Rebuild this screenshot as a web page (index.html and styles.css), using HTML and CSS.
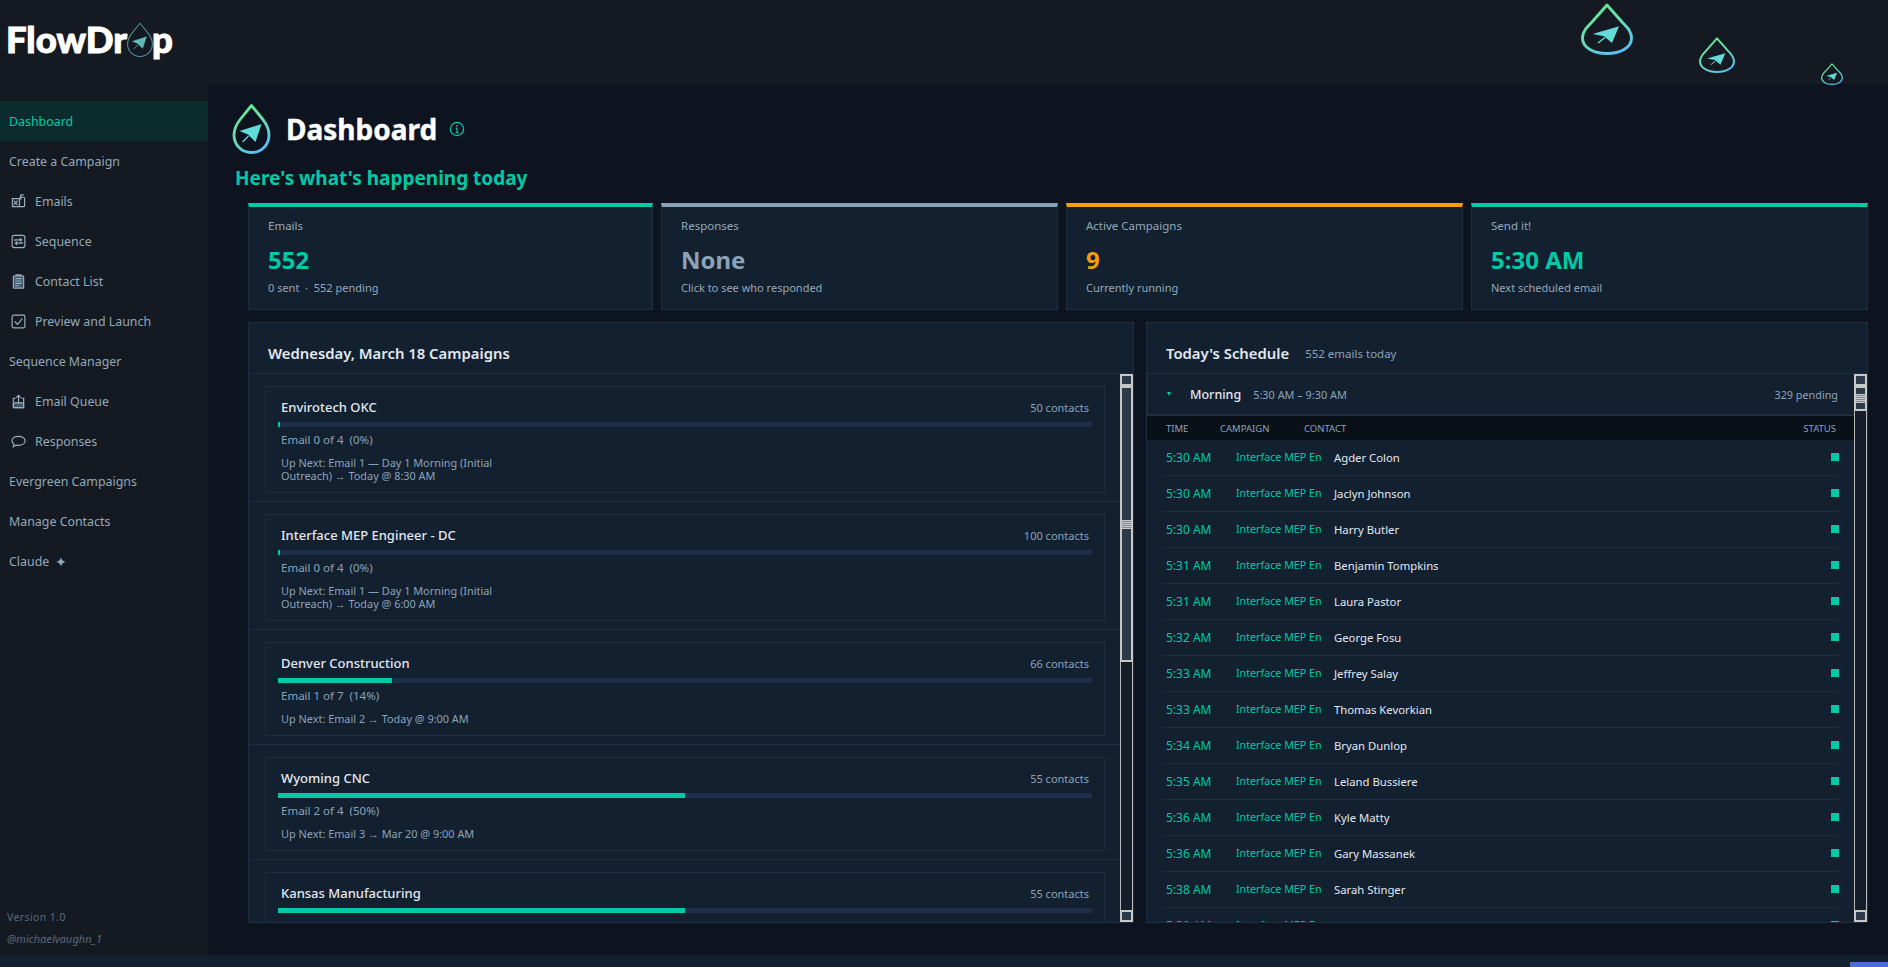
FILE: index.html
```html
<!DOCTYPE html>
<html lang="en">
<head>
<meta charset="utf-8">
<title>FlowDrop Dashboard</title>
<link rel="stylesheet" href="styles.css">
</head>
<body>
<svg class="defs" width="0" height="0" aria-hidden="true">
  <defs>
    <linearGradient id="dropGrad" x1="0.2" y1="0.05" x2="0.75" y2="1">
      <stop offset="0" stop-color="#63e692"/>
      <stop offset="0.45" stop-color="#68dfb0"/>
      <stop offset="1" stop-color="#56c0f8"/>
    </linearGradient>
    <linearGradient id="logoGrad" x1="0.25" y1="0" x2="0.7" y2="1">
      <stop offset="0" stop-color="#4fa583"/>
      <stop offset="1" stop-color="#4a94b8"/>
    </linearGradient>
    <symbol id="dropWide" viewBox="0 0 52 52">
      <path d="M26 2 L41 19 C47 25 50.500 29 50.500 35 C50.500 45 39 50.500 26 50.500 C13 50.500 1.500 45 1.500 35 C1.500 29 5 25 11 19 Z" fill="none" stroke="url(#dropGrad)" stroke-width="2.900" stroke-linejoin="round"/>
      <path d="M11.700 31 L38 23.300 L31 40 L23 33.300 Z" fill="#62dcd6"/>
      <path d="M24 34.500 L17 40" stroke="#62dcd6" stroke-width="1.400" fill="none"/>
    </symbol>
    <symbol id="dropTall" viewBox="0 0 38 50">
      <path d="M19 1.500 L30 15 C34 20 36.500 25 36.500 31 C36.500 41 29 48.500 19 48.500 C9 48.500 1.500 41 1.500 31 C1.500 25 4 20 8 15 Z" fill="none" stroke="url(#dropGrad)" stroke-width="2.800" stroke-linejoin="round"/>
      <path d="M7 27 L29 20 L23 38 L15.500 30.500 Z" fill="#62dcd6"/>
      <path d="M16 32 L10 38" stroke="#62dcd6" stroke-width="1.300" fill="none"/>
    </symbol>
    <symbol id="dropLogo" viewBox="0 0 38 50">
      <path d="M19 1.500 L30 15 C34 20 36.500 25 36.500 31 C36.500 41 29 48.500 19 48.500 C9 48.500 1.500 41 1.500 31 C1.500 25 4 20 8 15 Z" fill="#151922" stroke="url(#logoGrad)" stroke-width="2.800" stroke-linejoin="round"/>
      <path d="M7 27 L29 20 L23 38 L15.500 30.500 Z" fill="#5fb8b4"/>
      <path d="M16 32 L10 38" stroke="#5fb8b4" stroke-width="1.300" fill="none"/>
    </symbol>
  </defs>
</svg>

<header class="topbar">
  <div class="logo"><span>FlowDr</span><svg class="logo-drop"><use href="#dropLogo"/></svg><span>p</span></div>
  <svg class="float-drop float-a"><use href="#dropWide"/></svg>
  <svg class="float-drop float-b"><use href="#dropWide"/></svg>
  <svg class="float-drop float-c"><use href="#dropWide"/></svg>
</header>

<div class="shell">
  <aside class="sidebar">
    <nav class="nav">
      <a class="nav-item active">Dashboard</a>
      <a class="nav-item">Create a Campaign</a>
      <a class="nav-item"><svg class="nav-icon" viewBox="0 0 16 16"><path d="M1.500 5h7.500v8.500H1.500z M9 3.500h4.500a1 1 0 0 1 1 1v8a1 1 0 0 1-1 1H9 M10.500 6V1h3 M3 7l4 4.500 M7 7l-4 4.500"/></svg>Emails</a>
      <a class="nav-item"><svg class="nav-icon" viewBox="0 0 16 16"><rect x="1.200" y="1.500" width="13.600" height="13" rx="2.400"/><path d="M4 7.500V6.200h7 M9.400 4.400l2 1.800-2 1.800 M12 8.500v1.300H5 M6.600 8l-2 1.800 2 1.800"/></svg>Sequence</a>
      <a class="nav-item"><svg class="nav-icon" viewBox="0 0 16 16"><rect x="2.500" y="2" width="11" height="13" rx="1" fill="#3f5568"/><path d="M5.500 2V1h5v1 M4.500 5h7 M4.500 7.500h7 M4.500 10h7 M4.500 12.500h4.500"/></svg>Contact List</a>
      <a class="nav-item"><svg class="nav-icon" viewBox="0 0 16 16"><rect x="1.200" y="1.200" width="13.600" height="13.600" rx="1.600"/><path d="M4 8l3 3 5-6"/></svg>Preview and Launch</a>
      <a class="nav-item">Sequence Manager</a>
      <a class="nav-item"><svg class="nav-icon" viewBox="0 0 16 16"><rect x="2.500" y="9.500" width="11" height="5" rx="1" fill="#3f5568"/><path d="M5 4.500H2.500v10h11v-10H11 M8 10V1.500 M5.600 3.800L8 1.400l2.400 2.400"/></svg>Email Queue</a>
      <a class="nav-item"><svg class="nav-icon" viewBox="0 0 16 16"><path d="M8 2.500c3.900 0 7 2 7 4.800s-3.100 4.800-7 4.800c-.9 0-1.800-.1-2.600-.3L2.500 13.600l.6-2.900C1.800 9.800 1 8.600 1 7.300 1 4.500 4.100 2.500 8 2.500z"/></svg>Responses</a>
      <a class="nav-item">Evergreen Campaigns</a>
      <a class="nav-item">Manage Contacts</a>
      <a class="nav-item">Claude <span class="spark">✦</span></a>
    </nav>
    <div class="side-foot">
      <div class="version">Version 1.0</div>
      <div class="handle">@michaelvaughn_1</div>
    </div>
  </aside>

  <main class="main">
    <div class="title-row">
      <svg class="title-drop"><use href="#dropTall"/></svg>
      <h1 class="title">Dashboard</h1>
      <svg class="info" viewBox="0 0 16 16"><circle cx="8" cy="8" r="6.600"/><path d="M8 7v4.600 M6.600 11.600h2.800 M6.800 7H8"/><circle class="info-dot" cx="8" cy="4.800" r=".9"/></svg>
    </div>
    <h2 class="subtitle">Here's what's happening today</h2>

    <section class="stats">
      <div class="stat stat-teal">
        <div class="stat-label">Emails</div>
        <div class="stat-value">552</div>
        <div class="stat-sub">0 sent &nbsp;·&nbsp; 552 pending</div>
      </div>
      <div class="stat stat-grey">
        <div class="stat-label">Responses</div>
        <div class="stat-value">None</div>
        <div class="stat-sub">Click to see who responded</div>
      </div>
      <div class="stat stat-amber">
        <div class="stat-label">Active Campaigns</div>
        <div class="stat-value">9</div>
        <div class="stat-sub">Currently running</div>
      </div>
      <div class="stat stat-teal">
        <div class="stat-label">Send it!</div>
        <div class="stat-value">5:30 AM</div>
        <div class="stat-sub">Next scheduled email</div>
      </div>
    </section>

    <section class="panels">
      <div class="panel panel-left">
        <div class="panel-head"><h3 class="panel-title">Wednesday, March 18 Campaigns</h3></div>
        <div class="campaigns">
          <div class="camp-row">
            <div class="camp">
              <div class="camp-top"><span class="camp-name">Envirotech OKC</span><span class="camp-count">50 contacts</span></div>
              <div class="bar"><div class="fill" style="width:0.3%"></div></div>
              <div class="camp-progress">Email 0 of 4 &nbsp;(0%)</div>
              <div class="camp-next">Up Next: Email 1 — Day 1 Morning (Initial Outreach) → Today @ 8:30 AM</div>
            </div>
          </div>
          <div class="camp-row">
            <div class="camp">
              <div class="camp-top"><span class="camp-name">Interface MEP Engineer - DC</span><span class="camp-count">100 contacts</span></div>
              <div class="bar"><div class="fill" style="width:0.3%"></div></div>
              <div class="camp-progress">Email 0 of 4 &nbsp;(0%)</div>
              <div class="camp-next">Up Next: Email 1 — Day 1 Morning (Initial Outreach) → Today @ 6:00 AM</div>
            </div>
          </div>
          <div class="camp-row">
            <div class="camp">
              <div class="camp-top"><span class="camp-name">Denver Construction</span><span class="camp-count">66 contacts</span></div>
              <div class="bar"><div class="fill" style="width:14%"></div></div>
              <div class="camp-progress">Email 1 of 7 &nbsp;(14%)</div>
              <div class="camp-next">Up Next: Email 2 → Today @ 9:00 AM</div>
            </div>
          </div>
          <div class="camp-row">
            <div class="camp">
              <div class="camp-top"><span class="camp-name">Wyoming CNC</span><span class="camp-count">55 contacts</span></div>
              <div class="bar"><div class="fill" style="width:50%"></div></div>
              <div class="camp-progress">Email 2 of 4 &nbsp;(50%)</div>
              <div class="camp-next">Up Next: Email 3 → Mar 20 @ 9:00 AM</div>
            </div>
          </div>
          <div class="camp-row">
            <div class="camp">
              <div class="camp-top"><span class="camp-name">Kansas Manufacturing</span><span class="camp-count">55 contacts</span></div>
              <div class="bar"><div class="fill" style="width:50%"></div></div>
              <div class="camp-progress">Email 2 of 4 &nbsp;(50%)</div>
              <div class="camp-next">Up Next: Email 3 → Mar 20 @ 9:00 AM</div>
            </div>
          </div>
        </div>
        <div class="scroll">
          <div class="sb-btn"></div>
          <div class="sb-track">
            <div class="sb-thumb thumb-left"><div class="sb-grip"></div></div>
          </div>
          <div class="sb-btn"></div>
        </div>
      </div>

      <div class="panel panel-right">
        <div class="panel-head"><h3 class="panel-title">Today's Schedule</h3><span class="panel-note">552 emails today</span></div>
        <div class="schedule">
          <div class="group">
            <span class="caret"></span>
            <span class="group-name">Morning</span>
            <span class="group-time">5:30 AM – 9:30 AM</span>
            <span class="group-count">329 pending</span>
          </div>
          <div class="thead">
            <span class="th-time">TIME</span><span class="th-camp">CAMPAIGN</span><span class="th-contact">CONTACT</span><span class="th-status">STATUS</span>
          </div>
          <div class="row"><span class="r-time">5:30 AM</span><span class="r-camp">Interface MEP En</span><span class="r-name">Agder Colon</span><span class="dot"></span></div>
          <div class="row"><span class="r-time">5:30 AM</span><span class="r-camp">Interface MEP En</span><span class="r-name">Jaclyn Johnson</span><span class="dot"></span></div>
          <div class="row"><span class="r-time">5:30 AM</span><span class="r-camp">Interface MEP En</span><span class="r-name">Harry Butler</span><span class="dot"></span></div>
          <div class="row"><span class="r-time">5:31 AM</span><span class="r-camp">Interface MEP En</span><span class="r-name">Benjamin Tompkins</span><span class="dot"></span></div>
          <div class="row"><span class="r-time">5:31 AM</span><span class="r-camp">Interface MEP En</span><span class="r-name">Laura Pastor</span><span class="dot"></span></div>
          <div class="row"><span class="r-time">5:32 AM</span><span class="r-camp">Interface MEP En</span><span class="r-name">George Fosu</span><span class="dot"></span></div>
          <div class="row"><span class="r-time">5:33 AM</span><span class="r-camp">Interface MEP En</span><span class="r-name">Jeffrey Salay</span><span class="dot"></span></div>
          <div class="row"><span class="r-time">5:33 AM</span><span class="r-camp">Interface MEP En</span><span class="r-name">Thomas Kevorkian</span><span class="dot"></span></div>
          <div class="row"><span class="r-time">5:34 AM</span><span class="r-camp">Interface MEP En</span><span class="r-name">Bryan Dunlop</span><span class="dot"></span></div>
          <div class="row"><span class="r-time">5:35 AM</span><span class="r-camp">Interface MEP En</span><span class="r-name">Leland Bussiere</span><span class="dot"></span></div>
          <div class="row"><span class="r-time">5:36 AM</span><span class="r-camp">Interface MEP En</span><span class="r-name">Kyle Matty</span><span class="dot"></span></div>
          <div class="row"><span class="r-time">5:36 AM</span><span class="r-camp">Interface MEP En</span><span class="r-name">Gary Massanek</span><span class="dot"></span></div>
          <div class="row"><span class="r-time">5:38 AM</span><span class="r-camp">Interface MEP En</span><span class="r-name">Sarah Stinger</span><span class="dot"></span></div>
          <div class="row"><span class="r-time">5:39 AM</span><span class="r-camp">Interface MEP En</span><span class="r-name">Floyd Boyd</span><span class="dot"></span></div>
        </div>
        <div class="scroll">
          <div class="sb-btn"></div>
          <div class="sb-track">
            <div class="sb-thumb thumb-right"><div class="sb-grip"></div></div>
          </div>
          <div class="sb-btn"></div>
        </div>
      </div>
    </section>
  </main>
</div>

<footer class="bottom"><div class="bottom-tab"></div></footer>
</body>
</html>
```
FILE: styles.css
```css
* { box-sizing: border-box; }
html, body { margin: 0; height: 100%; }
body {
  display: flex;
  flex-direction: column;
  height: 967px;
  overflow: hidden;
  background: #0d1420;
  color: #e2e8f0;
  font-family: "Noto Sans", "Open Sans", sans-serif;
}
.defs { position: absolute; }
h1, h2, h3 { margin: 0; }

/* top bar */
.topbar {
  position: relative;
  flex: 0 0 84px;
  background: #151922;
  padding: 22px 0 0 6px;
}
.logo {
  display: flex;
  align-items: flex-start;
  font-family: "Lato", sans-serif;
  font-weight: 900;
  font-size: 36.500px;
  line-height: 34px;
  color: #fff;
  -webkit-text-stroke: 1px #fff;
  paint-order: stroke fill;
}
.logo-drop { width: 26px; height: 34px; margin: 1px -1px 0 0; position: relative; z-index: 1; }
.float-drop { position: absolute; }
.float-a { left: 1581px; top: 3px; width: 52px; height: 52px; }
.float-b { left: 1699px; top: 37px; width: 36px; height: 36px; }
.float-c { left: 1821px; top: 63px; width: 22px; height: 22px; }

.shell { flex: 1; display: flex; min-height: 0; }

/* sidebar */
.sidebar {
  flex: 0 0 208px;
  display: flex;
  flex-direction: column;
  justify-content: space-between;
  background: #151922;
  padding: 17px 0 8px;
}
.nav { display: flex; flex-direction: column; }
.nav-item {
  display: flex;
  align-items: center;
  height: 40px;
  padding-left: 9px;
  font-size: 12.400px;
  color: #93a9b8;
}
.nav-item.active { background: #0c2b2d; color: #00c9a7; }
.nav-icon {
  width: 15px;
  height: 15px;
  margin: 0 9px 0 2px;
  fill: none;
  stroke: #9ab0bd;
  stroke-width: 1.250;
}
.spark { margin-left: 6px; font-size: 14px; }
.side-foot { padding-left: 7px; color: #566c7d; }
.version { font-size: 10.500px; letter-spacing: .4px; line-height: 16px; margin-bottom: 6px; }
.handle { font-size: 11px; font-style: italic; line-height: 16px; }

/* main */
.main {
  flex: 1;
  min-width: 0;
  display: flex;
  flex-direction: column;
  padding: 20px 20px 32px 24px;
  background: #0d1420;
}
.title-row { display: flex; align-items: center; height: 50px; }
.title-drop { width: 39px; height: 50px; flex: none; }
.title {
  margin-left: 15px;
  font-size: 28px;
  font-weight: 700;
  line-height: 34px;
  color: #fff;
  -webkit-text-stroke: 0.4px #fff;
}
.info {
  width: 16px;
  height: 16px;
  margin-left: 12px;
  fill: none;
  stroke: #00c9a7;
  stroke-width: 1.250;
}
.info-dot { fill: #00c9a7; stroke: none; }
.subtitle {
  margin: 11px 0 0 3px;
  font-size: 19px;
  font-weight: 700;
  line-height: 26px;
  color: #00c9a7;
}

.stats {
  display: grid;
  grid-template-columns: 404fr 396fr 396fr 396fr;
  gap: 8px;
  margin: 12px 0 0 16px;
  height: 107px;
}
.stat {
  background: #132030;
  border: 1px solid #1e2d42;
  border-top: 4px solid #00c9a7;
  padding: 11px 19px 0;
}
.stat-teal { border-top-color: #00c9a7; }
.stat-grey { border-top-color: #8ba3b8; }
.stat-amber { border-top-color: #f59e0b; }
.stat-label { font-size: 11.500px; line-height: 16px; color: #93a9b8; }
.stat-value { margin-top: 11px; font-size: 24px; font-weight: 700; line-height: 30px; color: #00c9a7; }
.stat-grey .stat-value { color: #8ba3b8; }
.stat-amber .stat-value { color: #f59e0b; }
.stat-sub { margin-top: 5px; font-size: 11px; line-height: 16px; color: #93a9b8; }

.panels {
  flex: 1;
  min-height: 0;
  display: grid;
  grid-template-columns: 886fr 722fr;
  gap: 12px;
  margin: 12px 0 0 16px;
}
.panel {
  position: relative;
  min-height: 0;
  display: flex;
  flex-direction: column;
  overflow: hidden;
  background: #132030;
  border: 1px solid #1e2d42;
}
.panel-head {
  flex: 0 0 51px;
  display: flex;
  align-items: center;
  gap: 16px;
  padding: 10px 0 0 19px;
  border-bottom: 1px solid #1e2d42;
}
.panel-title { font-size: 14.850px; font-weight: 600; color: #e2e8f0; }
.panel-note { font-size: 11.500px; color: #8ba3b8; }

/* campaigns */
.campaigns { flex: 1; min-height: 0; overflow: hidden; }
.camp-row {
  padding: 12px 28px 8px 16px;
  border-bottom: 1px solid #1e2d42;
}
.camp {
  padding: 10px 12px 10px;
  border: 1px solid #1e2d42;
}
.camp-top {
  display: flex;
  justify-content: space-between;
  align-items: center;
  padding: 0 3px;
  height: 20px;
}
.camp-name { font-size: 13px; font-weight: 500; color: #e2e8f0; }
.camp-count { font-size: 11px; color: #8ba3b8; }
.bar { height: 5px; margin-top: 5px; background: #1e2f47; }
.fill { height: 100%; background: #00c9a7; min-width: 1px; }
.camp-progress { margin: 5px 0 0 3px; font-size: 11.500px; line-height: 16px; color: #8ba3b8; }
.camp-next {
  margin: 8px 0 0 3px;
  max-width: 245px;
  font-size: 10.900px;
  line-height: 13px;
  color: #8ba3b8;
}
.camp-row:nth-child(n+3) .camp-next { max-width: none; }

/* schedule */
.schedule { flex: 1; min-height: 0; overflow: hidden; padding-right: 13px; }
.group {
  display: flex;
  align-items: center;
  height: 42px;
  padding-left: 19px;
  border-bottom: 2px solid #1e2d42;
  border-left: 1px solid #1e2d42;
}
.caret {
  width: 0;
  height: 0;
  border-left: 2.500px solid transparent;
  border-right: 2.500px solid transparent;
  border-top: 4px solid #00c9a7;
}
.group-name { margin-left: 19px; font-size: 12.500px; font-weight: 500; color: #e2e8f0; }
.group-time { margin-left: 12px; font-size: 10.900px; color: #8ba3b8; }
.group-count { margin-left: auto; padding-right: 16px; font-size: 10.800px; color: #8ba3b8; }
.thead {
  display: flex;
  align-items: center;
  height: 24px;
  padding-left: 19px;
  background: #0a1018;
  font-size: 9.500px;
  color: #8ba3b8;
}
.th-time { width: 54px; }
.th-camp { width: 84px; }
.th-status { margin-left: auto; padding-right: 18px; }
.row {
  display: flex;
  align-items: center;
  height: 36px;
  margin: 0 15px 0 16px;
  padding: 0 0 1px 3px;
  border-bottom: 1px solid #1e2d42;
}
.r-time { width: 70px; font-size: 12px; color: #00c9a7; }
.r-camp { width: 98px; font-size: 10.700px; color: #00c9a7; white-space: nowrap; overflow: hidden; }
.r-name { font-size: 11.300px; color: #e2e8f0; }
.dot { width: 8px; height: 8px; margin-left: auto; background: #00c9a7; }

/* painted scrollbars */
.scroll {
  position: absolute;
  right: 0;
  top: 51px;
  bottom: 0;
  width: 13px;
  display: flex;
  flex-direction: column;
}
.sb-btn {
  flex: 0 0 12px;
  background: #2c3a4a;
  border: 2px solid #c8c8c8;
}
.sb-track {
  flex: 1;
  background: #151d2b;
  border-left: 1px solid #b8b8b8;
  border-right: 1px solid #b8b8b8;
}
.sb-thumb {
  display: flex;
  align-items: center;
  justify-content: center;
  margin: 0 -1px;
  background: #2c3a4a;
  border: 2px solid #c8c8c8;
}
.thumb-left { height: 276px; }
.thumb-right { height: 25px; }
.sb-grip {
  width: 100%;
  height: 9px;
  background: repeating-linear-gradient(#c8c8c8 0 1px, #7f8a94 1px 2px);
}

/* bottom strip */
.bottom {
  position: relative;
  flex: 0 0 12px;
  background: #12202f;
}
.bottom-tab {
  position: absolute;
  right: 0;
  bottom: 0;
  width: 38px;
  height: 5px;
  background: #4a6fd8;
}
```
